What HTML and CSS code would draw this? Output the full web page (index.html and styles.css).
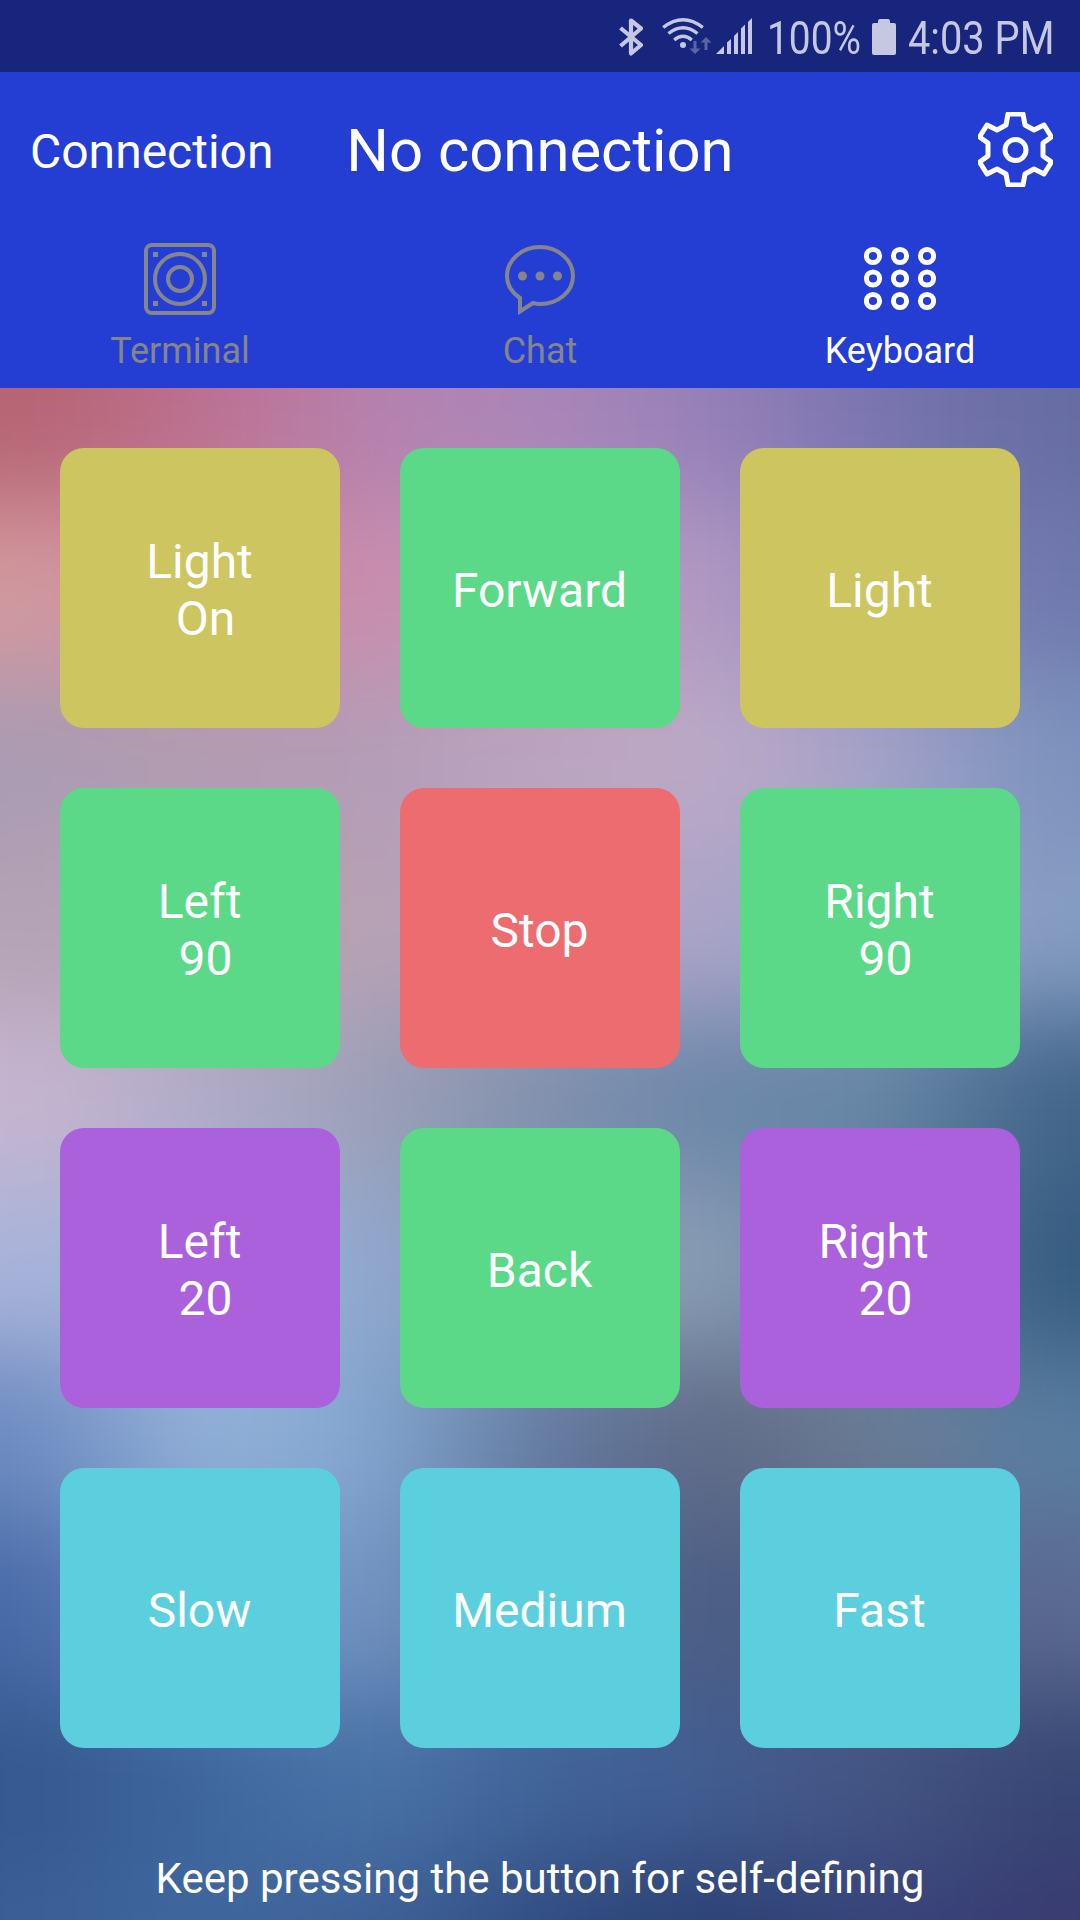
FILE: index.html
```html
<!DOCTYPE html>
<html lang="en">
<head>
<meta charset="utf-8">
<title>Bluetooth keyboard</title>
<link rel="stylesheet" href="styles.css">
</head>
<body>
<div class="status">
  <svg class="bluetooth" width="24" height="38" viewBox="0 0 24 38"><path d="M1.500 10 22 27 12 35.500V2.500L22 10.500 1.500 28" fill="none" stroke="currentColor" stroke-width="4.200" stroke-linejoin="round"/></svg>
  <svg class="wifi" width="49" height="38" viewBox="0 0 49 38"><g fill="none" stroke="currentColor" stroke-width="3.4"><path d="M1.2 9.5Q21 -6 40.8 9.5"/><path d="M6.5 15.5Q21 4 35.5 15.5"/><path d="M12.2 22Q21 14.500 29.800 22"/></g><circle cx="21" cy="27" r="3"/><path class="traffic" d="M31.500 23h3v7.500h4l-5.500 5.500-5.500-5.500h4zM42.500 32h3v-7.500h4l-5.500-5.500-5.500 5.500h4z"/></svg>
  <svg class="signal" width="37" height="38" viewBox="0 0 37 38"><path d="M0 36 8 28v8zM11 24.500 15 21v15h-4zM18 18 22 14v22h-4zM25 10.500 29 6.500v29.500h-4zM32 4 36 0v36h-4z"/></svg>
  <span class="percent">100%</span>
  <svg class="battery" width="24" height="36" viewBox="0 0 24 36"><path d="M6 4V2Q6 0 8 0h8q2 0 2 2v2h4q2 0 2 2v28q0 2-2 2H2q-2 0-2-2V6q0-2 2-2z"/></svg>
  <span class="clock">4:03 PM</span>
</div>
<header class="header">
  <div class="titlebar">
    <span class="connect">Connection</span>
    <h1 class="title">No connection</h1>
    <svg class="gear" width="75" height="75" viewBox="0 0 75 75"><g fill="none" stroke="currentColor" stroke-width="5" stroke-linejoin="round"><path d="M30 2H45L47 13 56 18 66 13 73.500 25 65 31V44L73.500 50 66 62 56 57 47 62 45 73H30L28 62 19 57 9 62 1.500 50 10 44V31L1.500 25 9 13 19 18 28 13Z"/><circle cx="37.500" cy="38" r="10.500"/></g></svg>
  </div>
  <nav class="tabs">
    <div class="tab">
      <svg width="72" height="72" viewBox="0 0 72 72"><g fill="none" stroke="currentColor" stroke-width="4"><rect x="2" y="2" width="68" height="68" rx="6"/><circle cx="36" cy="36" r="25"/><circle cx="36" cy="36" r="12"/></g><path d="M9 9h5v5H9zM58 9h5v5h-5zM9 58h5v5H9zM58 58h5v5h-5z"/></svg>
      <span>Terminal</span>
    </div>
    <div class="tab">
      <svg width="72" height="72" viewBox="0 0 72 72"><path d="M16 55C7 49 3 41 3 33 3 17 18 4 36 4S69 17 69 33 54 61 36 61Q32 61 29 60L16 68.500Z" fill="none" stroke="currentColor" stroke-width="4"/><g><circle cx="18.500" cy="33" r="4.500"/><circle cx="36" cy="33" r="4.500"/><circle cx="53.500" cy="33" r="4.500"/></g></svg>
      <span>Chat</span>
    </div>
    <div class="tab active">
      <svg width="72" height="72" viewBox="0 0 72 72"><g fill="none" stroke="currentColor" stroke-width="5"><circle cx="9" cy="13" r="6.600"/><circle cx="36" cy="13" r="6.600"/><circle cx="63" cy="13" r="6.600"/><circle cx="9" cy="35.500" r="6.600"/><circle cx="36" cy="35.500" r="6.600"/><circle cx="63" cy="35.500" r="6.600"/><circle cx="9" cy="58" r="6.600"/><circle cx="36" cy="58" r="6.600"/><circle cx="63" cy="58" r="6.600"/></g></svg>
      <span>Keyboard</span>
    </div>
  </nav>
</header>
<main class="board">
  <div class="wallpaper">
    <div class="band b0"></div><div class="band b1"></div><div class="band b2"></div><div class="band b3"></div><div class="band b4"></div><div class="band b5"></div><div class="band b6"></div><div class="band b7"></div><div class="band b8"></div><div class="band b9"></div>
  </div>
  <div class="keys">
    <div class="key yellow">Light
 On</div>
    <div class="key green">Forward</div>
    <div class="key yellow">Light</div>
    <div class="key green">Left
 90</div>
    <div class="key red">Stop</div>
    <div class="key green">Right
 90</div>
    <div class="key purple">Left
 20</div>
    <div class="key green">Back</div>
    <div class="key purple">Right&nbsp;
 20</div>
    <div class="key cyan">Slow</div>
    <div class="key cyan">Medium</div>
    <div class="key cyan">Fast</div>
  </div>
  <p class="hint">Keep pressing the button for self-defining</p>
</main>
</body>
</html>
```
FILE: styles.css
```css
* { box-sizing: border-box; }
body {
  margin: 0;
  width: 1080px;
  height: 1920px;
  overflow: hidden;
  display: flex;
  flex-direction: column;
  font-family: Roboto, sans-serif;
  color: #fff;
}
svg { display: block; flex: none; fill: currentColor; }

.status {
  height: 72px;
  background: #17267c;
  color: #c5c7e3;
  display: flex;
  align-items: flex-start;
  padding: 18px 27px 0 619px;
}
.wifi { margin-left: 19px; overflow: visible; }
.traffic { fill: #5b64a6; }
.signal { margin-left: 5px; }
.status span {
  font-size: 46px;
  line-height: 40px;
  white-space: nowrap;
  transform-origin: 0 0;
}
.percent { width: 91px; margin-left: 14px; transform: scaleX(.845); }
.battery { margin: 1px 0 0 14px; }
.clock { width: 145px; margin-left: 12px; transform: scaleX(.865); }

.header { height: 316px; background: #243ed3; }
.titlebar {
  height: 158px;
  display: grid;
  grid-template-columns: 1fr auto 1fr;
  align-items: center;
  padding: 0 27px 0 30px;
}
.connect { font-size: 48px; }
.title { margin: 0 3px 0 0; font-size: 59.8px; font-weight: 400; }
.gear { justify-self: end; position: relative; top: -2px; }
.tabs { display: grid; grid-template-columns: repeat(3, 1fr); padding-top: 13px; }
.tab {
  display: flex;
  flex-direction: column;
  align-items: center;
  color: #85858c;
  font-size: 36px;
  line-height: 42px;
  gap: 15px;
}
.tab.active { color: #fff; }

.board { position: relative; height: 1532px; overflow: hidden; padding: 60px 60px 0; }
/* Soft colour field: horizontal gradient bands blended into each other */
.wallpaper { position: absolute; left: -140px; top: -55px; width: 1360px; filter: blur(50px); }
.band { height: 170px; }
.b0 { margin-top: -150px; height: 320px; }
.b9 { height: 320px; }
.b0 { background: linear-gradient(90deg, #b66472 170px, #bd7090 340px, #b582ae 510px, #aa86b9 680px, #9680b8 850px, #7974af 1020px, #666da2 1190px); }
.b1 { background: linear-gradient(90deg, #d2999e 170px, #cb8c9c 340px, #ca8caf 510px, #be97b8 680px, #b19ac5 850px, #8b85ba 1020px, #6e78ad 1190px); }
.b2 { background: linear-gradient(90deg, #aa9bb3 170px, #b29cb2 340px, #b39cb6 510px, #bba4c0 680px, #bda9c6 850px, #a4a2c8 1020px, #7b92bd 1190px); }
.b3 { background: linear-gradient(90deg, #b4a2b5 170px, #b7a0b3 340px, #b8a1b4 510px, #b3a3be 680px, #aba5ca 850px, #98a0c6 1020px, #859dc3 1190px); }
.b4 { background: linear-gradient(90deg, #c7b5d0 170px, #b1acc8 340px, #9da0b7 510px, #8090ad 680px, #6a86a9 850px, #6787a5 1020px, #42648a 1190px); }
.b5 { background: linear-gradient(90deg, #a9b3da 170px, #a0b4da 340px, #8fa7ce 510px, #8799b5 680px, #8c9eb6 850px, #617f9d 1020px, #355b80 1190px); }
.b6 { background: linear-gradient(90deg, #6c8ac0 170px, #94b2d9 340px, #82a6d0 510px, #637ba1 680px, #5f6985 850px, #6c7d96 1020px, #587da1 1190px); }
.b7 { background: linear-gradient(90deg, #4769a7 170px, #6f90bf 340px, #7495c4 510px, #577197 680px, #495b82 850px, #526389 1020px, #5c6a90 1190px); }
.b8 { background: linear-gradient(90deg, #34588f 170px, #3d669d 340px, #4974a8 510px, #406399 680px, #425d91 850px, #445482 1020px, #374674 1190px); }
.b9 { background: linear-gradient(90deg, #3a5f96 170px, #3f689e 340px, #3d6097 510px, #314c81 680px, #293f72 850px, #38447c 1020px, #393a70 1190px); }

.keys {
  position: relative;
  display: grid;
  grid-template-columns: repeat(3, 280px);
  grid-auto-rows: 280px;
  gap: 60px;
}
.key {
  display: flex;
  align-items: center;
  justify-content: center;
  text-align: center;
  white-space: pre;
  border-radius: 24px;
  padding: 4px 1px 0 0;
  font-size: 48px;
  line-height: 57px;
}
.yellow { background: #ccc560; }
.green { background: #5bd988; }
.red { background: #ed6c70; }
.purple { background: #ab60dc; }
.cyan { background: #5ccfde; }
.hint {
  position: relative;
  margin: 106px 0 0;
  text-align: center;
  font-size: 42px;
  line-height: 50px;
}
```
